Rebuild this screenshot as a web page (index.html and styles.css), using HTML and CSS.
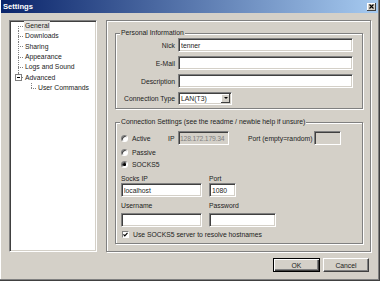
FILE: index.html
```html
<!DOCTYPE html>
<html lang="en">

<head>
  <meta charset="UTF-8">
  <meta name="viewport" content="width=device-width, initial-scale=1.0">
  <title>Settings</title>
  <link rel="stylesheet" href="styles.css">
</head>

<body>
  <div class="window">
    <!-- title bar -->
    <div class="titlebar">
      <span class="title">Settings</span>
      <span class="close">
        <svg width="5" height="5" viewBox="0 0 5 5">
          <path d="M0.5 0.5L4.5 4.5M4.5 0.5L0.5 4.5" stroke="#000" stroke-width="1.1" />
        </svg>
      </span>
    </div>

    <div class="content">
      <div class="main">
        <!-- left tree -->
        <ul class="tree">
          <li class="node"><span class="branch first"></span><span class="label selected">General</span></li>
          <li class="node"><span class="branch"></span><span class="label">Downloads</span></li>
          <li class="node"><span class="branch"></span><span class="label">Sharing</span></li>
          <li class="node"><span class="branch"></span><span class="label">Appearance</span></li>
          <li class="node"><span class="branch"></span><span class="label">Logs and Sound</span></li>
          <li class="node"><span class="branch last"><span class="toggle"></span></span><span class="label">Advanced</span></li>
          <li class="node"><span class="indent"></span><span class="branch last"></span><span class="label">User Commands</span></li>
        </ul>

        <!-- property page -->
        <div class="page">
          <fieldset class="group personal">
            <legend>Personal Information</legend>
            <div class="form-grid">
              <label>Nick</label>
              <input class="field" type="text" value="tenner">
              <label>E-Mail</label>
              <input class="field" type="text">
              <label>Description</label>
              <input class="field" type="text">
              <label>Connection Type</label>
              <div class="combo">
                <span class="combo-text">LAN(T3)</span>
                <span class="drop"></span>
              </div>
            </div>
          </fieldset>

          <fieldset class="group connection">
            <legend>Connection Settings (see the readme / newbie help if unsure)</legend>
            <div class="conn-row first-row">
              <span class="option"><span class="radio"></span>Active</span>
              <span class="ip-label">IP</span>
              <input class="field disabled ip" type="text" value="128.172.179.34" disabled>
              <span class="port-label">Port (empty=random)</span>
              <input class="field disabled port" type="text" disabled>
            </div>
            <div class="conn-row">
              <span class="option"><span class="radio"></span>Passive</span>
            </div>
            <div class="conn-row">
              <span class="option"><span class="radio checked"></span>SOCKS5</span>
            </div>

            <div class="socks-grid">
              <span>Socks IP</span>
              <span>Port</span>
              <input class="field" type="text" value="localhost">
              <input class="field short" type="text" value="1080">
              <span>Username</span>
              <span>Password</span>
              <input class="field" type="text">
              <input class="field" type="password">
            </div>

            <div class="check-row">
              <span class="checkbox">
                <svg width="5" height="5" viewBox="0 0 5 5">
                  <path d="M0.5 2.3L1.8 3.8L4.5 0.8" fill="none" stroke="#000" stroke-width="1.2" />
                </svg>
              </span>
              Use SOCKS5 server to resolve hostnames
            </div>
          </fieldset>
        </div>
      </div>

      <div class="buttons">
        <button class="btn default">OK</button>
        <button class="btn">Cancel</button>
      </div>
    </div>
  </div>
</body>

</html>
```

FILE: styles.css
```css
* {
  box-sizing: border-box;
}

body {
  margin: 0;
  font-family: "Liberation Sans", Arial, sans-serif;
  font-size: 6.8px;
  color: #222;
}

/* window frame */
.window {
  width: 380px;
  height: 281px;
  display: flex;
  flex-direction: column;
  padding: 0 2px 1px 1px;
  background: #d4d0c8;
  box-shadow: inset -1px -1px 0 #404040, inset -2px -2px 0 #808080, inset 1px 0 0 #fff;
}

.titlebar {
  height: 13px;
  display: flex;
  align-items: center;
  justify-content: space-between;
  padding: 0 2px;
  background: linear-gradient(to right, #0a246a, #a6caf0);
}

.title {
  color: #fff;
  font-weight: bold;
  font-size: 7.6px;
}

.close {
  width: 9px;
  height: 8px;
  display: flex;
  align-items: center;
  justify-content: center;
  background: #d4d0c8;
  box-shadow: inset -1px -1px 0 #404040, inset 1px 1px 0 #fff;
}

.content {
  flex: 1;
  display: flex;
  flex-direction: column;
  padding: 7px 7px 0 8px;
}

.main {
  display: flex;
  gap: 9px;
  height: 232px;
}

/* tree on the left */
.tree {
  width: 88px;
  flex: none;
  margin: 0;
  padding: 0 1px 1px 1px;
  list-style: none;
  background: #fff;
  border: 1px solid;
  border-color: #808080 #fff #fff #808080;
  box-shadow: inset 1px 1px 0 #404040, inset -1px -1px 0 #d4d0c8;
}

.node {
  display: flex;
  height: 10.33px;
  line-height: 10.33px;
}

/* dotted lines: horizontal + vertical */
.branch {
  width: 13px;
  flex: none;
  display: flex;
  align-items: center;
  background-image:
    repeating-linear-gradient(to right, #808080 0 1px, transparent 1px 2px),
    repeating-linear-gradient(to bottom, #808080 0 1px, transparent 1px 2px);
  background-size: 6px 1px, 1px 100%;
  background-position: 7px 50%, 7px 0;
  background-repeat: no-repeat;
}

.branch.first {
  background-size: 6px 1px, 1px 50%;
  background-position: 7px 50%, 7px 100%;
}

.branch.last {
  background-size: 6px 1px, 1px 50%;
  background-position: 7px 50%, 7px 0;
}

.toggle {
  width: 7px;
  height: 7px;
  margin-left: 4px;
  border: 1px solid #808080;
  background: #fff linear-gradient(#000, #000) center / 3px 1px no-repeat;
}

.indent {
  width: 13px;
  flex: none;
}

.label {
  padding: 0 1px;
  white-space: nowrap;
}

.selected {
  background: #e4e2dd;
}

/* property page */
.page {
  flex: 1;
  padding: 8px 7px 0 8px;
  border: 1px solid #808080;
  box-shadow: inset 1px 1px 0 #fff, 1px 1px 0 #fff;
}

.group {
  margin: 0;
  border: 1px solid #808080;
  box-shadow: inset 1px 1px 0 #fff, 1px 1px 0 #fff;
}

.group legend {
  padding: 0 1px;
  line-height: 8px;
  background: #d4d0c8;
}

.personal {
  padding: 1px 9px 3px 4px;
}

.form-grid {
  display: grid;
  grid-template-columns: 55px 175px;
  grid-template-rows: 14px 14px 14px 13px;
  column-gap: 3px;
  row-gap: 4px;
  align-items: center;
}

.form-grid label {
  text-align: right;
  white-space: nowrap;
}

.field {
  width: 100%;
  height: 14px;
  margin: 0;
  padding: 0 2px;
  font: inherit;
  color: #222;
  background: #fff;
  border: 1px solid;
  border-color: #808080 #fff #fff #808080;
  box-shadow: inset 1px 1px 0 #404040, inset -1px -1px 0 #d4d0c8;
  outline: none;
}

.field.disabled {
  background: #d4d0c8;
  color: #808080;
}

.combo {
  width: 54px;
  height: 13px;
  display: flex;
  align-items: center;
  padding: 1px;
  background: #fff;
  border: 1px solid;
  border-color: #808080 #fff #fff #808080;
  box-shadow: inset 1px 1px 0 #404040, inset -1px -1px 0 #d4d0c8;
}

.combo-text {
  flex: 1;
  padding-left: 1px;
}

.drop {
  width: 9px;
  height: 9px;
  background: #d4d0c8;
  box-shadow: inset -1px -1px 0 #404040, inset 1px 1px 0 #fff;
}

.drop::after {
  content: '';
  display: block;
  margin: 3px auto 0;
  width: 0;
  height: 0;
  border-left: 2px solid transparent;
  border-right: 2px solid transparent;
  border-top: 2px solid #000;
}

.connection {
  margin-top: 9px;
  padding: 5px 4px 4px 5px;
}

.connection legend {
  margin-left: -1px;
}

.conn-row {
  display: flex;
  align-items: center;
  height: 12px;
}

.conn-row.first-row {
  height: 14px;
  margin-bottom: 1px;
}

.option {
  width: 47px;
  display: flex;
  align-items: center;
  gap: 4px;
}

.radio {
  width: 7px;
  height: 7px;
  flex: none;
  border-radius: 50%;
  background: #fff;
  border: 1px solid;
  border-color: #808080 #fff #fff #808080;
  box-shadow: inset 1px 1px 0 #404040;
}

.radio.checked {
  background: radial-gradient(circle, #000 0 1.3px, #fff 1.8px);
}

.ip-label {
  width: 10px;
}

.field.ip {
  width: 51px;
  padding: 0 1px;
  letter-spacing: -0.2px;
}

.port-label {
  margin-left: 19px;
  margin-right: 2px;
  white-space: nowrap;
}

.field.port {
  width: 27px;
}

.socks-grid {
  display: grid;
  grid-template-columns: 81px 67px;
  grid-template-rows: 10px 14px 16px 14px;
  column-gap: 7px;
  align-items: center;
  margin-top: 3px;
}

.field.short {
  width: 27px;
}

.check-row {
  display: flex;
  align-items: center;
  gap: 4px;
  height: 9px;
  margin-top: 3px;
  padding-left: 1px;
}

.checkbox {
  width: 7px;
  height: 7px;
  display: flex;
  align-items: center;
  justify-content: center;
  background: #fff;
  border: 1px solid;
  border-color: #808080 #fff #fff #808080;
}

/* bottom buttons */
.buttons {
  display: flex;
  justify-content: flex-end;
  gap: 3px;
  margin-top: 6px;
  padding-right: 2px;
}

.btn {
  width: 46px;
  height: 14px;
  padding: 0;
  font: inherit;
  color: #222;
  background: #d4d0c8;
  border: 1px solid;
  border-color: #fff #404040 #404040 #fff;
  box-shadow: inset -1px -1px 0 #808080;
}

.btn.default {
  width: 47px;
  border: 1px solid #000;
  box-shadow: inset 1px 1px 0 #fff, inset -1px -1px 0 #404040, inset -2px -2px 0 #808080;
}
```
